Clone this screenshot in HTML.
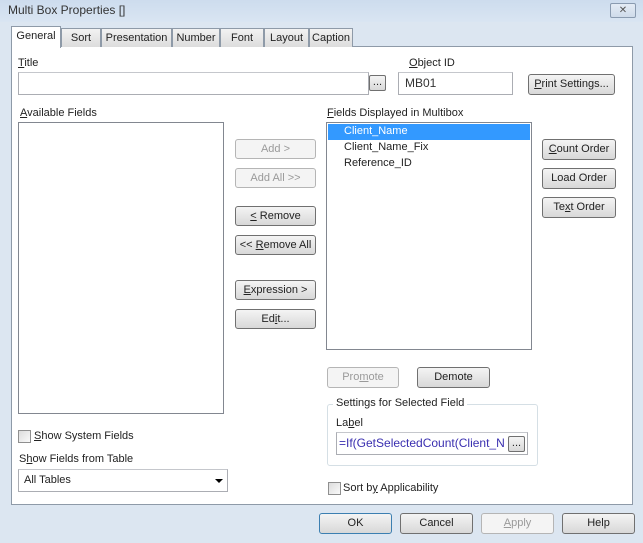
<!DOCTYPE html>
<html><head><style>
*{box-sizing:border-box;margin:0;padding:0}
body{width:643px;height:543px;overflow:hidden;background:#dce6f1;font-family:"Liberation Sans",sans-serif;font-size:11px;color:#222;position:relative}
.a{position:absolute}
.title{left:0;top:0;width:643px;height:22px;background:linear-gradient(#cddcee,#d9e5f2);}
.panel{left:11px;top:46px;width:622px;height:459px;background:#fff;border:1px solid #8e9aa8}
.tab{top:28px;height:19px;background:linear-gradient(#f2f2f2,#dcdcdc);border:1px solid #8e9aa8;border-bottom:none;text-align:center;line-height:18px;font-size:11px}
.input{background:#fff;border:1px solid #abadb3;border-top-color:#c5c7cc}
.btn{background:linear-gradient(#f4f4f4,#e6e6e6 50%,#d8d8d8);border:1px solid #707070;border-radius:3px;text-align:center;font-size:11px}
.dis{color:#9a9a9a;border-color:#b5b5b5;background:#f4f4f4}
.list{background:#fff;border:1px solid #828790}
.cb{width:13px;height:13px;border:1px solid #8f8f8f;background:linear-gradient(135deg,#dcdcdc,#fafafa)}
u{text-decoration:underline}
</style></head><body>
<div class="a title"></div>
<div class="a" style="left:8px;top:3px;font-size:12px;color:#333">Multi Box Properties []</div>
<div class="a" style="left:610px;top:3px;width:26px;height:15px;border:1px solid #8a9bb0;border-radius:2px;background:linear-gradient(#e4ecf5,#cfdbea);text-align:center;font-size:10px;line-height:13px;color:#555">✕</div>
<div class="a panel"></div>
<div class="a tab" style="left:61px;width:40px">Sort</div>
<div class="a tab" style="left:101px;width:71px">Presentation</div>
<div class="a tab" style="left:172px;width:48px">Number</div>
<div class="a tab" style="left:220px;width:44px">Font</div>
<div class="a tab" style="left:264px;width:45px">Layout</div>
<div class="a tab" style="left:309px;width:44px">Caption</div>
<div class="a tab" style="left:11px;top:26px;width:50px;height:22px;background:#fff;line-height:19px;z-index:2">General</div>

<div class="a" style="left:18px;top:57px"><u>T</u>itle</div>
<div class="a input" style="left:18px;top:72px;width:351px;height:23px"></div>
<div class="a btn" style="left:369px;top:75px;width:17px;height:16px;line-height:12px;border-radius:2px">...</div>
<div class="a" style="left:409px;top:57px"><u>O</u>bject ID</div>
<div class="a input" style="left:398px;top:72px;width:115px;height:23px;padding:3px 6px;font-size:12px;color:#333">MB01</div>
<div class="a btn" style="left:528px;top:74px;width:87px;height:21px;line-height:19px"><u>P</u>rint Settings...</div>

<div class="a" style="left:20px;top:107px"><u>A</u>vailable Fields</div>
<div class="a list" style="left:18px;top:122px;width:206px;height:292px"></div>
<div class="a btn dis" style="left:235px;top:139px;width:81px;height:20px;line-height:18px">Add &gt;</div>
<div class="a btn dis" style="left:235px;top:168px;width:81px;height:20px;line-height:18px">Add All &gt;&gt;</div>
<div class="a btn" style="left:235px;top:206px;width:81px;height:20px;line-height:18px"><u>&lt;</u> Remove</div>
<div class="a btn" style="left:235px;top:235px;width:81px;height:20px;line-height:18px">&lt;&lt; <u>R</u>emove All</div>
<div class="a btn" style="left:235px;top:280px;width:81px;height:20px;line-height:18px"><u>E</u>xpression &gt;</div>
<div class="a btn" style="left:235px;top:309px;width:81px;height:20px;line-height:18px">Ed<u>i</u>t...</div>

<div class="a" style="left:327px;top:107px"><u>F</u>ields Displayed in Multibox</div>
<div class="a list" style="left:326px;top:122px;width:206px;height:228px"></div>
<div class="a" style="left:328px;top:124px;width:202px;height:16px;background:#3399ff"></div>
<div class="a" style="left:344px;top:125px;color:#fff">Client_Name</div>
<div class="a" style="left:344px;top:141px">Client_Name_Fix</div>
<div class="a" style="left:344px;top:157px">Reference_ID</div>
<div class="a btn" style="left:542px;top:139px;width:74px;height:21px;line-height:19px"><u>C</u>ount Order</div>
<div class="a btn" style="left:542px;top:168px;width:74px;height:21px;line-height:19px">Load Order</div>
<div class="a btn" style="left:542px;top:197px;width:74px;height:21px;line-height:19px">Te<u>x</u>t Order</div>
<div class="a btn dis" style="left:327px;top:367px;width:72px;height:21px;line-height:19px">Pro<u>m</u>ote</div>
<div class="a btn" style="left:417px;top:367px;width:73px;height:21px;line-height:19px">Demote</div>

<div class="a" style="left:327px;top:404px;width:211px;height:62px;border:1px solid #d5dfe5;border-radius:3px"></div>
<div class="a" style="left:333px;top:397px;background:#fff;padding:0 3px">Settings for Selected Field</div>
<div class="a" style="left:336px;top:417px">La<u>b</u>el</div>
<div class="a input" style="left:336px;top:432px;width:192px;height:23px"></div>
<div class="a" style="left:339px;top:436px;font-size:12px;color:#3a2fb0;white-space:nowrap">=If(GetSelectedCount(Client_N</div>
<div class="a btn" style="left:508px;top:436px;width:17px;height:16px;line-height:12px;border-radius:2px">...</div>

<div class="a cb" style="left:18px;top:430px"></div>
<div class="a" style="left:34px;top:430px"><u>S</u>how System Fields</div>
<div class="a" style="left:19px;top:453px">S<u>h</u>ow Fields from Table</div>
<div class="a input" style="left:18px;top:469px;width:210px;height:23px;padding:4px 5px">All Tables</div>
<div class="a" style="left:215px;top:479px;width:0;height:0;border-left:4px solid transparent;border-right:4px solid transparent;border-top:4px solid #000"></div>
<div class="a cb" style="left:328px;top:482px"></div>
<div class="a" style="left:343px;top:482px">Sort b<u>y</u> Applicability</div>

<div class="a btn" style="left:319px;top:513px;width:73px;height:21px;line-height:19px;border-color:#3c7fb1">OK</div>
<div class="a btn" style="left:400px;top:513px;width:73px;height:21px;line-height:19px">Cancel</div>
<div class="a btn dis" style="left:481px;top:513px;width:73px;height:21px;line-height:19px"><u>A</u>pply</div>
<div class="a btn" style="left:562px;top:513px;width:73px;height:21px;line-height:19px">Help</div>
</body></html>
